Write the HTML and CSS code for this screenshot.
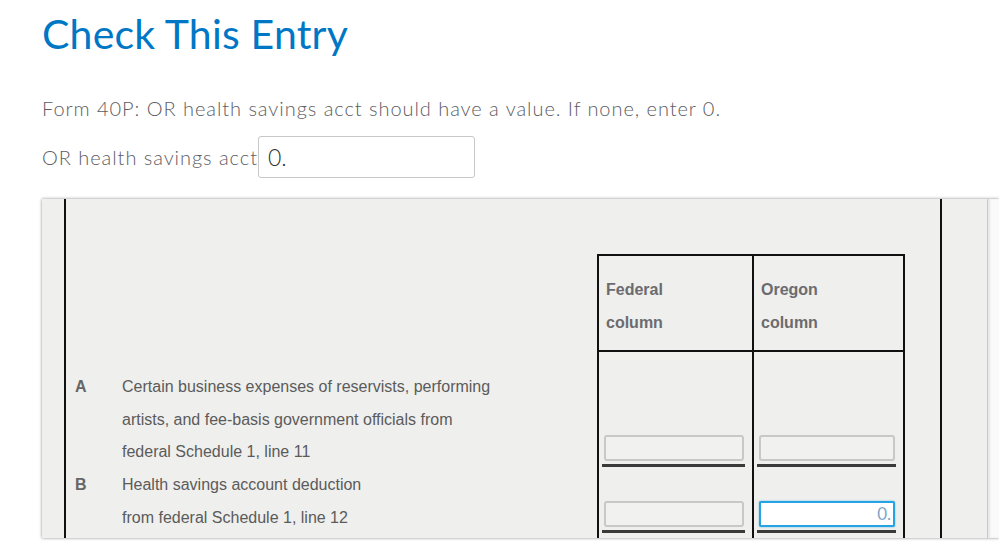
FILE: index.html
```html
<!DOCTYPE html>
<html>
<head>
<meta charset="utf-8">
<link rel="stylesheet" href="styles.css">
</head>
<body>
<div class="page">
  <h1 class="title">Check This Entry</h1>
  <p class="message">Form 40P: OR health savings acct should have a value. If none, enter 0.</p>
  <div class="field">
    <label class="field-label">OR health savings acct</label>
    <div class="field-input">0.</div>
  </div>
  <div class="panel">
    <div class="gutter"></div>
    <div class="main">
      <div class="grid">
        <div class="spacer"></div>
        <div class="spacer"></div>
        <div class="spacer"></div>
        <div class="spacer"></div>

        <div class="cell head-blank"></div>
        <div class="cell head fed">Federal<br>column</div>
        <div class="cell head ore">Oregon<br>column</div>
        <div class="cell"></div>

        <div class="cell desc row-a">
          <span class="letter">A</span>
          <span class="desc-text">Certain business expenses of reservists, performing<br>artists, and fee-basis government officials from<br>federal Schedule 1, line 11</span>
        </div>
        <div class="cell amt amt-a fed"><div class="box"></div><div class="rule"></div></div>
        <div class="cell amt amt-a ore"><div class="box"></div><div class="rule"></div></div>
        <div class="cell"></div>

        <div class="cell desc row-b">
          <span class="letter">B</span>
          <span class="desc-text">Health savings account deduction<br>from federal Schedule 1, line 12</span>
        </div>
        <div class="cell amt amt-b fed"><div class="box"></div><div class="rule"></div></div>
        <div class="cell amt amt-b ore"><div class="box active">0.</div><div class="rule"></div></div>
        <div class="cell"></div>
      </div>
    </div>
    <div class="right-strip"></div>
    <div class="edge"></div>
  </div>
</div>
</body>
</html>
```

FILE: styles.css
```css
html, body {
  margin: 0;
  padding: 0;
  background: #ffffff;
  overflow: hidden;
}
body {
  width: 999px;
  height: 551px;
  font-family: "Lato", "Noto Sans", sans-serif;
}
.page {
  padding-left: 42px;
  padding-top: 10px;
}
.title {
  margin: 0;
  font-size: 41px;
  line-height: 48px;
  font-weight: 400;
  color: #0077c5;
  letter-spacing: 0.2px;
}
.message {
  margin: 37px 0 0 0;
  font-size: 20px;
  line-height: 26px;
  font-weight: 300;
  letter-spacing: 0.95px;
  color: #5c5d63;
}
.field {
  margin-top: 15px;
  display: flex;
  align-items: center;
}
.field-label {
  font-size: 20px;
  font-weight: 300;
  letter-spacing: 0.95px;
  color: #5c5d63;
}
.field-input {
  margin-left: 0;
  width: 206px;
  height: 40px;
  border: 1px solid #c8c8c8;
  border-radius: 3px;
  padding-left: 9px;
  font-size: 23px;
  font-weight: 300;
  line-height: 40px;
  color: #333;
  box-sizing: content-box;
}
.panel {
  margin-top: 21px;
  width: 957px;
  height: 339px;
  background: #efefed;
  box-shadow: 0 0 3px rgba(0,0,0,0.45);
  display: flex;
  overflow: hidden;
}
.gutter {
  width: 22px;
  flex: none;
}
.main {
  width: 874px;
  flex: none;
  border-left: 2px solid #111;
  border-right: 2px solid #111;
}
.right-strip {
  width: 45px;
  flex: none;
}
.edge {
  flex: 1;
  background: #fafafa;
  border-left: 1px solid #c9c9c9;
  box-shadow: inset 2px 0 2px rgba(0,0,0,0.08);
}
.grid {
  display: grid;
  grid-template-columns: 531px 155px 153px 1fr;
  grid-template-rows: 55px 98px 117px 80px;
  font-family: "Liberation Sans", Arial, sans-serif;
  font-size: 16px;
  color: #555;
}
.fed {
  border-left: 2px solid #111;
}
.ore {
  border-left: 2px solid #111;
  border-right: 2px solid #111;
}
.head {
  border-top: 2px solid #111;
  border-bottom: 2px solid #111;
  padding: 17px 0 0 7px;
  line-height: 33px;
  font-weight: bold;
  color: #6b6b6f;
}
.desc {
  display: flex;
  padding: 0 0 0 9px;
  line-height: 32.5px;
}
.row-a {
  padding-top: 19px;
}
.letter {
  width: 47px;
  flex: none;
  font-weight: bold;
  color: #666;
}
.desc-text {
  color: #5b5b5b;
}
.amt {
  display: flex;
  flex-direction: column;
  padding: 0 7px 2px 3px;
}
.amt-a {
  justify-content: flex-end;
}
.amt-b {
  justify-content: flex-start;
  padding-top: 32px;
}
.box {
  height: 22px;
  margin: 0 1px 0 2px;
  border: 2px solid #c8c8c8;
  border-radius: 3px;
  background: #f1f1f0;
}
.box.active {
  background: #fff;
  border-color: #25a3e3;
  box-shadow: 0 0 2px rgba(37,163,227,0.7);
  border-radius: 2px;
  text-align: right;
  font-family: "Lato", sans-serif;
  font-size: 17px;
  line-height: 22px;
  color: #7fa6c8;
  padding-right: 2px;
}
.rule {
  margin-top: 3px;
  height: 3px;
  background: #3a3a3a;
}
```
